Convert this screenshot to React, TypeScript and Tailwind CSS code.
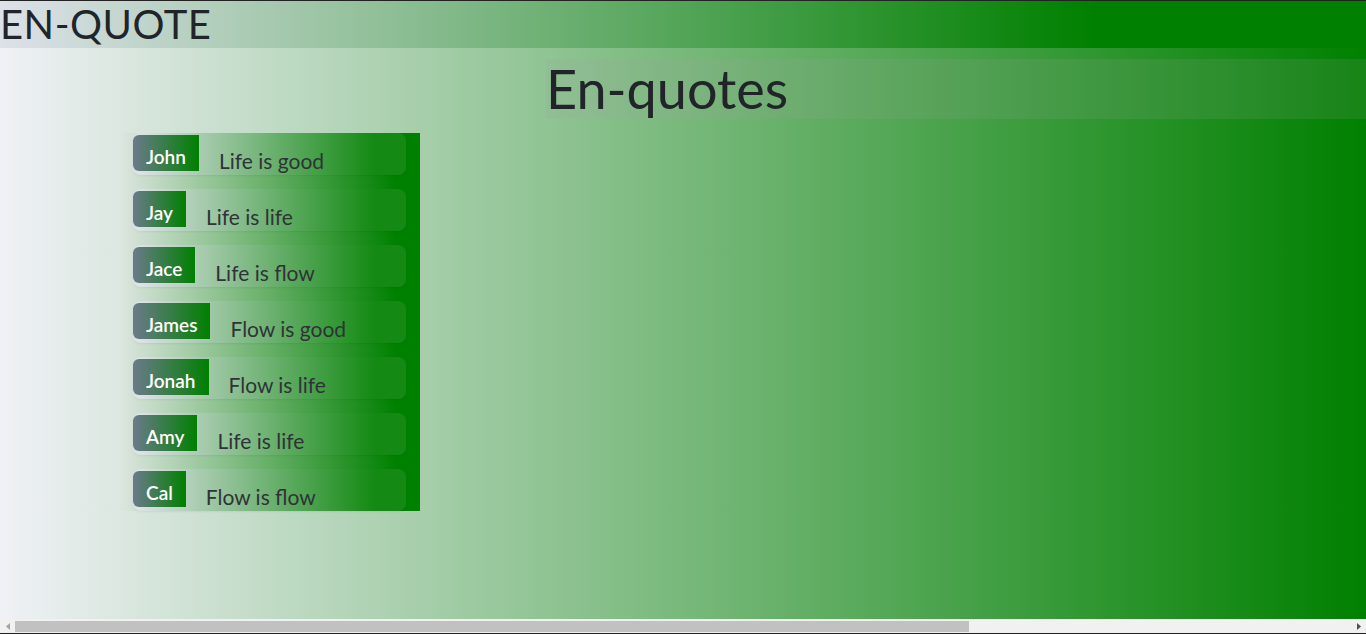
const quotes = [
  { name: "John", text: "Life is good" },
  { name: "Jay", text: "Life is life" },
  { name: "Jace", text: "Life is flow" },
  { name: "James", text: "Flow is good" },
  { name: "Jonah", text: "Flow is life" },
  { name: "Amy", text: "Life is life" },
  { name: "Cal", text: "Flow is flow" },
];

function QuoteItem({ name, text }: { name: string; text: string }) {
  return (
    <li className="flex h-[42px] items-start rounded-lg bg-[linear-gradient(to_right,#e2e5ec,#148a14_88%)] shadow-[0_1px_2px_rgba(0,0,0,0.06)]">
      <span className="mt-[2px] h-[36px] rounded-l-md bg-[linear-gradient(to_right,#6b7a8b,#008000)] px-[13px] pt-[10px] text-[19px] leading-[23px] font-semibold text-white">
        {name}
      </span>
      <span className="ml-[20px] pt-[15px] text-[21px] leading-[25px] text-[#2f3337]">{text}</span>
    </li>
  );
}

function Scrollbar() {
  return (
    <div className="flex h-[14px] items-center bg-[#f1f1f1]">
      <div className="flex w-[15px] justify-center">
        <svg width="4" height="7" viewBox="0 0 4 7">
          <path d="M4 0 L0 3.5 L4 7 Z" fill="#a3a3a3" />
        </svg>
      </div>
      <div className="h-[11px] w-[954px] bg-[#c1c1c1]" />
      <div className="flex-1" />
      <div className="flex w-[15px] justify-center">
        <svg width="4" height="7" viewBox="0 0 4 7">
          <path d="M0 0 L4 3.5 L0 7 Z" fill="#505050" />
        </svg>
      </div>
    </div>
  );
}

export default function App() {
  return (
    <div className="flex h-[634px] w-full flex-col overflow-hidden font-['Lato',sans-serif] text-[#212529]">
      <div className="h-px bg-[#222]" />

      <main className="flex-1 bg-[linear-gradient(to_right,#f0f1f6,#008000)]">
        {/* Header */}
        <header className="h-[47px] bg-[linear-gradient(to_right,#dde1e9,#008000_80%)]">
          <h2 className="text-[40px] leading-[47px] font-normal tracking-[0.5px]">EN-QUOTE</h2>
        </header>

        {/* Title band */}
        <div className="mt-[11px] ml-[546px] h-[60px] bg-[rgba(160,160,160,0.15)]">
          <h1 className="text-[54px] leading-[60px] font-normal">En-quotes</h1>
        </div>

        {/* Quotes list */}
        <ul className="mt-[14px] ml-[120px] flex w-[300px] flex-col gap-[14px] bg-[linear-gradient(to_right,#dde6e0,#008000_92%)] pr-[14px] pl-[13px]">
          {quotes.map((q) => (
            <QuoteItem key={q.name} name={q.name} text={q.text} />
          ))}
        </ul>
      </main>

      <Scrollbar />
      <div className="h-px bg-[#222]" />
    </div>
  );
}
